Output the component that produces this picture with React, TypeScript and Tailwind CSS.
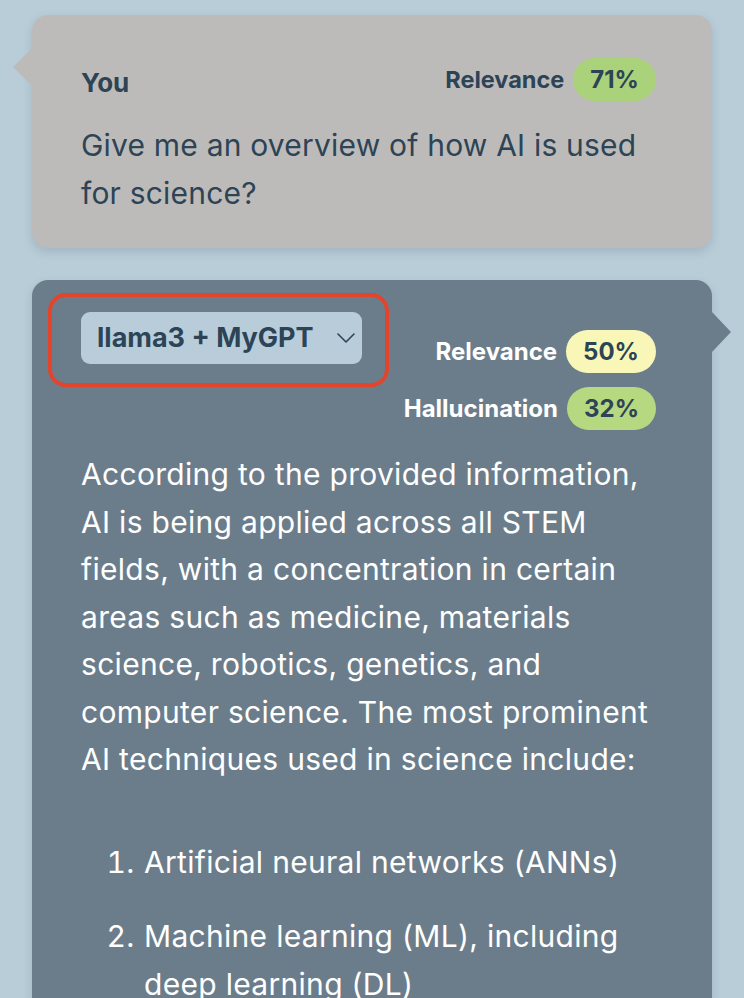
import React from "react";

const font = { fontFamily: "Inter, 'Noto Sans', sans-serif" };

function Pill({ value, color }: { value: string; color: string }) {
  return (
    <span
      className={`inline-flex h-[43px] items-center justify-center rounded-full px-[17px] text-[24px] font-bold text-[#2d4356] ${color}`}
    >
      {value}
    </span>
  );
}

export default function App() {
  return (
    <div
      className="min-h-[998px] w-full overflow-hidden bg-[#b8cdd8] pt-[15px]"
      style={font}
    >
      <div className="flex flex-col gap-[32px] pl-[32px] pr-[32px]">
        {/* User card */}
        <div className="relative rounded-[16px] bg-[#bdbbb9] pb-[31px] pl-[49px] pr-[56px] pt-[42px] text-[#2d4356] shadow-[0_4px_10px_rgba(60,80,100,0.18)]">
          <div className="absolute left-[-19px] top-[33px] h-0 w-0 border-b-[19px] border-r-[19px] border-t-[19px] border-b-transparent border-r-[#bdbbb9] border-t-transparent" />
          <div className="flex items-center justify-between">
            <span className="mt-[6px] text-[26px] font-bold">You</span>
            <div className="flex items-center gap-[9px]">
              <span className="text-[23.5px] font-bold">Relevance</span>
              <Pill value="71%" color="bg-[#a9d27a]" />
            </div>
          </div>
          <p className="mt-[20px] text-[30px] leading-[47.5px] tracking-[0.2px]">
            Give me an overview of how AI is used for science?
          </p>
        </div>

        {/* Assistant card */}
        <div className="relative min-h-[760px] rounded-[16px] bg-[#6b7d8b] pl-[49px] pr-[56px] pt-[32px] text-white shadow-[0_4px_10px_rgba(60,80,100,0.18)]">
          <div className="absolute right-[-19px] top-[32px] h-0 w-0 border-b-[20px] border-l-[19px] border-t-[20px] border-b-transparent border-l-[#6b7d8b] border-t-transparent" />
          <div className="flex items-start justify-between">
            <div className="relative">
              <div className="absolute bottom-[-23px] left-[-33px] right-[-27px] top-[-19px] rounded-[18px] border-[4px] border-[#e3442b]" />
              <div className="flex h-[52px] w-[281px] items-center justify-between rounded-[9px] bg-[#b8cdd9] pl-[16px] pr-[7px] text-[#2d4356]">
                <span className="text-[27px] font-bold">llama3 + MyGPT</span>
                <svg width="18" height="10" viewBox="0 0 18 10" fill="none">
                  <path d="M1 1l8 8 8-8" stroke="#2d4356" strokeWidth="1.6" strokeLinecap="round" strokeLinejoin="round" />
                </svg>
              </div>
            </div>
            <div className="mt-[18px] flex flex-col items-end gap-[14px]">
              <div className="flex items-center gap-[9px]">
                <span className="text-[24px] font-bold">Relevance</span>
                <Pill value="50%" color="bg-[#f8f7b8]" />
              </div>
              <div className="flex items-center gap-[9px]">
                <span className="text-[24px] font-bold">Hallucination</span>
                <Pill value="32%" color="bg-[#b6d880]" />
              </div>
            </div>
          </div>
          <p className="mt-[21px] text-[30px] leading-[47.5px] tracking-[0.3px]">
            According to the provided information, AI is being applied across all STEM fields, with a concentration in certain areas such as medicine, materials science, robotics, genetics, and computer science. The most prominent AI techniques used in science include:
          </p>
          <ol className="mt-[55px] list-decimal pl-[62px] text-[30px] leading-[47.5px] tracking-[0.3px]">
            <li className="pl-[1px]">Artificial neural networks (ANNs)</li>
            <li className="mt-[27px] pl-[1px]">Machine learning (ML), including deep learning (DL)</li>
          </ol>
        </div>
      </div>
    </div>
  );
}
